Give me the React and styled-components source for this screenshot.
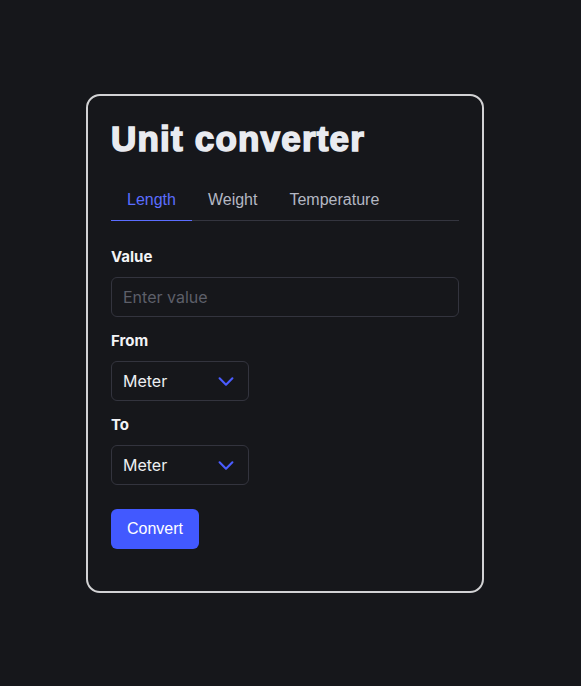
import React, { useState } from 'react';
import styled, { createGlobalStyle } from 'styled-components';

const GlobalStyle = createGlobalStyle`
    html, body {
        margin: 0;
        padding: 0;
        background: #16171b;
    }
`;

const TABS = ['Length', 'Weight', 'Temperature'];

const Chevron = () => (
    <svg width="22" height="22" viewBox="0 0 24 24" fill="none" stroke="#4a5cff" strokeWidth="2.3" strokeLinecap="round" strokeLinejoin="round">
        <path d="M5 9l7 7 7-7" />
    </svg>
);

const App = () => {
    const [tab, setTab] = useState('Length');

    return (
        <Page>
            <GlobalStyle />
            <Card>
                <Title>Unit converter</Title>
                <Tabs>
                    {TABS.map(t => (
                        <Tab key={t} $active={t === tab} onClick={() => setTab(t)}>{t}</Tab>
                    ))}
                </Tabs>
                <Form>
                    <Label>Value</Label>
                    <Input placeholder="Enter value" />
                    <Label>From</Label>
                    <Select>
                        <span>Meter</span>
                        <Chevron />
                    </Select>
                    <Label>To</Label>
                    <Select>
                        <span>Meter</span>
                        <Chevron />
                    </Select>
                    <Button>Convert</Button>
                </Form>
            </Card>
        </Page>
    );
};

export default App;

const Page = styled.div`
    min-height: 686px;
    padding: 94px 0 0 86px;
    box-sizing: border-box;
`;

const Card = styled.div`
    width: 398px;
    box-sizing: border-box;
    border: 2px solid #d2d2d4;
    border-radius: 14px;
    padding: 22px 23px 42px;
    background: #16171b;
`;

const Title = styled.h1`
    margin: 0;
    font-family: "Liberation Sans", Arial, sans-serif;
    font-weight: 700;
    font-size: 35px;
    line-height: 42px;
    letter-spacing: 1.2px;
    color: #e9ebf0;
    -webkit-text-stroke: 1.6px #e9ebf0;
`;

const Tabs = styled.div`
    display: flex;
    margin-top: 21px;
    border-bottom: 1px solid #34353f;
`;

const Tab = styled.button`
    background: none;
    border: none;
    margin: 0 0 -1px;
    padding: 0 16px 2px;
    height: 40px;
    font-family: "Liberation Sans", Arial, sans-serif;
    font-size: 16px;
    color: ${p => (p.$active ? '#5b6dff' : '#b4b7c3')};
    border-bottom: 1px solid ${p => (p.$active ? '#5b6dff' : 'transparent')};
    cursor: pointer;
`;

const Form = styled.div`
    display: flex;
    flex-direction: column;
    align-items: flex-start;
    padding-top: 26px;
`;

const Label = styled.div`
    font-family: Inter, "Noto Sans", sans-serif;
    font-weight: 700;
    font-size: 15px;
    line-height: 20px;
    color: #f2f3f6;
    margin-bottom: 10px;
`;

const Input = styled.input`
    width: 100%;
    height: 40px;
    box-sizing: border-box;
    margin: 0 0 14px;
    padding: 0 11px;
    background: transparent;
    border: 1px solid #33343e;
    border-radius: 6px;
    font-family: Inter, "Noto Sans", sans-serif;
    font-size: 16px;
    color: #e6e7ec;
    outline: none;
    &::placeholder {
        color: #5d5f69;
    }
`;

const Select = styled.div`
    display: flex;
    align-items: center;
    justify-content: space-between;
    width: 138px;
    height: 40px;
    box-sizing: border-box;
    margin-bottom: 14px;
    padding: 0 11px;
    border: 1px solid #33343e;
    border-radius: 6px;
    font-family: Inter, "Noto Sans", sans-serif;
    font-size: 16px;
    color: #eceef2;
    cursor: pointer;
`;

const Button = styled.button`
    margin-top: 10px;
    height: 40px;
    padding: 0 16px;
    border: none;
    border-radius: 6px;
    background: #4259ff;
    color: #ffffff;
    font-family: "Liberation Sans", Arial, sans-serif;
    font-size: 16px;
    cursor: pointer;
`;
